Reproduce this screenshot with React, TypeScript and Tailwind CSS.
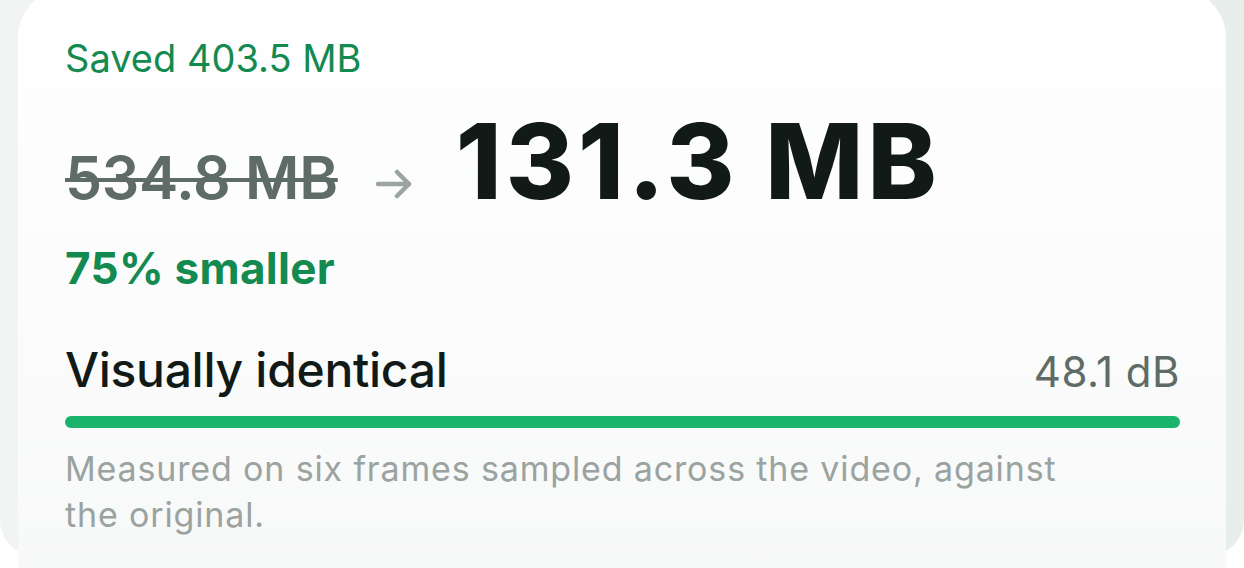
import React from "react";

export default function App() {
  return (
    <div className="w-[1244px] h-[568px] overflow-hidden bg-white" style={{ fontFamily: "Inter, 'Noto Sans', sans-serif" }}>
      <div className="h-[568px] bg-gradient-to-r from-[#f1f4f3] via-[#e8eeeb] to-[#e8eeeb] rounded-bl-[36px] rounded-br-[36px] pl-[18px] pr-[18px]">
        <div className="-mt-[12px] h-[640px] rounded-[50px] bg-gradient-to-b from-white to-[#f7f8f8] pl-[47px] pr-[46px] pt-[50px]">
          <div className="text-[38px] leading-[40px] text-[#138a50]">Saved 403.5 MB</div>
          <div className="mt-[31px] flex items-baseline h-[104px]">
            <span className="text-[59px] leading-[104px] font-semibold text-[#5f6b66] line-through decoration-[4px] tracking-[-0.3px]">534.8 MB</span>
            <span className="ml-[37px] inline-block">
              <svg width="38" height="30" viewBox="0 0 38 30" fill="none" stroke="#9aa5a0" strokeWidth="4.5" strokeLinecap="round" strokeLinejoin="round" className="block">
                <path d="M3 15 H34" />
                <path d="M22 3 L34 15 L22 27" />
              </svg>
            </span>
            <span className="ml-[43px] text-[104px] leading-[104px] font-extrabold text-[#111a16] tracking-[4px]">131.3 MB</span>
          </div>
          <div className="mt-[31px] text-[44px] leading-[48px] font-bold text-[#138a50] tracking-[0.3px]">75% smaller</div>
          <div className="mt-[50px] flex items-baseline justify-between h-[56px]">
            <span className="text-[48px] leading-[56px] font-medium text-[#111a16] tracking-[-0.3px]">Visually identical</span>
            <span className="text-[42px] leading-[56px] text-[#5f6b66] tracking-[0.5px]">48.1 dB</span>
          </div>
          <div className="mt-[18px] h-[12px] rounded-full bg-[#19b46a]" />
          <div className="mt-[18px] w-[1000px] text-[34px] leading-[46px] text-[#9aa3a0] tracking-[0.85px]">
            Measured on six frames sampled across the video, against the original.
          </div>
        </div>
      </div>
    </div>
  );
}
